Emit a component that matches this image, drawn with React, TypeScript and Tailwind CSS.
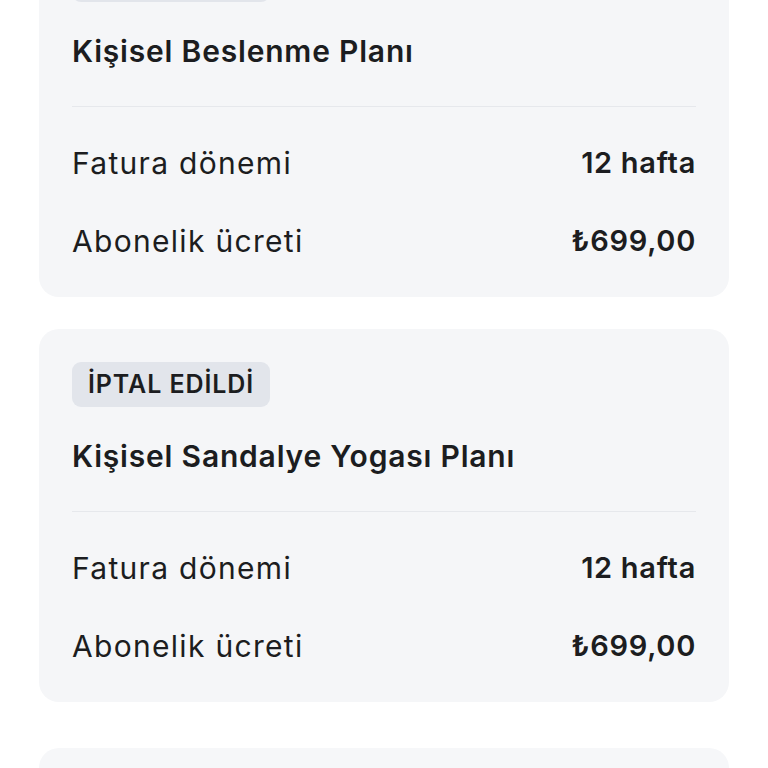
const PLANS = [
  { status: 'İPTAL EDİLDİ', title: 'Kişisel Beslenme Planı', period: '12 hafta', price: '₺699,00' },
  { status: 'İPTAL EDİLDİ', title: 'Kişisel Sandalye Yogası Planı', period: '12 hafta', price: '₺699,00' },
];

function PlanCard({ status, title, period, price }: (typeof PLANS)[number]) {
  return (
    <div className="rounded-[20px] bg-[#f5f6f8] px-[33px] pt-[33px] pb-[38px]">
      <div className="inline-flex h-[45px] items-center rounded-[9px] bg-[#e2e5eb] px-[16px] text-[25px] font-semibold tracking-[0.9px] text-[#1c1d20]">
        {status}
      </div>
      <div className="mt-[31px] text-[30px] leading-[36px] font-semibold tracking-[0.8px] text-[#1c1d20]">{title}</div>
      <div className="mt-[37px] border-t border-[#e6e8ec]" />
      <div className="mt-[38px] flex flex-col gap-[42px] leading-[36px] text-[#1c1d20]">
        <div className="flex items-center justify-between">
          <span className="text-[30px] font-normal tracking-[1.3px]">Fatura dönemi</span>
          <span className="text-[29px] font-semibold tracking-[0.7px]">{period}</span>
        </div>
        <div className="flex items-center justify-between">
          <span className="text-[30px] font-normal tracking-[1.3px]">Abonelik ücreti</span>
          <span className="text-[29px] font-semibold tracking-[0.7px]">{price}</span>
        </div>
      </div>
    </div>
  );
}

export default function App() {
  return (
    <div className="h-[768px] overflow-hidden bg-white px-[39px] font-['Inter',sans-serif]">
      <div className="mt-[-76px] flex flex-col gap-[32px]">
        {PLANS.map((p, i) => (
          <PlanCard key={i} {...p} />
        ))}
        <div className="mt-[14px] h-[200px] rounded-[20px] bg-[#f6f7f9]" />
      </div>
    </div>
  );
}
